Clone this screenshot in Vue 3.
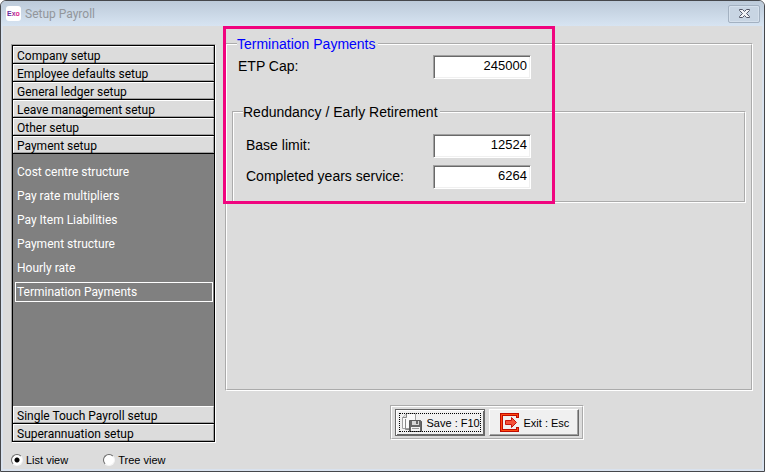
<script setup>
import { ref } from 'vue'

const topSections = [
  'Company setup',
  'Employee defaults setup',
  'General ledger setup',
  'Leave management setup',
  'Other setup',
  'Payment setup',
]
const bottomSections = ['Single Touch Payroll setup', 'Superannuation setup']

const pages = [
  'Cost centre structure',
  'Pay rate multipliers',
  'Pay Item Liabilities',
  'Payment structure',
  'Hourly rate',
  'Termination Payments',
]

const activePage = ref('Termination Payments')
const view = ref('list')
const etpCap = ref('245000')
const baseLimit = ref('12524')
const yearsService = ref('6264')
</script>

<template>
  <div class="window">
    <header class="titlebar">
      <svg class="app-icon" width="15" height="15" viewBox="0 0 15 15">
        <rect x="0" y="0" width="15" height="15" rx="3" fill="#fff" />
        <text x="1" y="10" font-family="Liberation Sans, sans-serif" font-size="7" font-weight="700">
          <tspan fill="#6a2c9c">E</tspan><tspan fill="#a3309a">x</tspan><tspan fill="#e0218a">o</tspan>
        </text>
      </svg>
      <h1>Setup Payroll</h1>
      <button type="button" class="close" aria-label="Close">
        <svg width="13" height="11" viewBox="0 0 13 11">
          <path
            d="M1.5 1.5H4.5L6.5 3.5L8.5 1.5H11.5V2.5L8.5 5.5L11.5 8.5V9.5H8.5L6.5 7.5L4.5 9.5H1.5V8.5L4.5 5.5L1.5 2.5Z"
            fill="#f2f4f7"
            stroke="#535666"
          />
        </svg>
      </button>
    </header>

    <div class="body">
      <aside class="side">
        <nav class="sections">
          <button v-for="name in topSections" :key="name" type="button" class="section">{{ name }}</button>
          <ul class="pages">
            <li v-for="page in pages" :key="page">
              <button type="button" class="page" :class="{ active: page === activePage }" @click="activePage = page">
                {{ page }}
              </button>
            </li>
          </ul>
          <button v-for="name in bottomSections" :key="name" type="button" class="section">{{ name }}</button>
        </nav>
        <div class="views">
          <label><input v-model="view" type="radio" name="view" value="list" />List view</label>
          <label><input v-model="view" type="radio" name="view" value="tree" />Tree view</label>
        </div>
      </aside>

      <main class="content">
        <fieldset class="group outer">
          <legend class="blue">Termination Payments</legend>
          <div class="row">
            <label for="etp-cap">ETP Cap:</label>
            <input id="etp-cap" v-model="etpCap" type="text" />
          </div>
          <fieldset class="group inner">
            <legend>Redundancy / Early Retirement</legend>
            <div class="row">
              <label for="base-limit">Base limit:</label>
              <input id="base-limit" v-model="baseLimit" type="text" />
            </div>
            <div class="row">
              <label for="years-service">Completed years service:</label>
              <input id="years-service" v-model="yearsService" type="text" />
            </div>
          </fieldset>
        </fieldset>

        <div class="actions">
          <button type="button" class="action default">
            <svg width="20" height="19" viewBox="0 0 20 19">
              <path d="M.5 4.5L4.5 .5H13.5V15.5H.5Z" fill="#fafafa" stroke="#a0a0a0" />
              <path d="M4.5 .5V4.5H.5" fill="#ddd" stroke="#8a8a8a" />
              <path d="M3.5 6V16.5H8" fill="none" stroke="#888" />
              <path d="M7.5 7.5H18.5L19.5 8.5V18.5H7.5Z" fill="#686868" stroke="#5a5a5a" />
              <rect x="10" y="8" width="7" height="4" fill="#d8d8d8" />
              <rect x="14" y="8" width="2" height="3" fill="#686868" />
              <rect x="9" y="14" width="9" height="4" fill="#f4f4f4" />
              <path d="M10 15.5H17" stroke="#999" />
            </svg>
            <span>Save : F10</span>
          </button>
          <button type="button" class="action">
            <svg width="19" height="19" viewBox="0 0 19 19">
              <path d="M17.5 5V1.5H1.5V17.5H17.5V14" fill="none" stroke="#c00b00" stroke-width="3" />
              <path d="M17.5 4V1.5H1.5V17.5H17.5V15" fill="none" stroke="#ff4a12" stroke-width="1" />
              <path d="M5.5 7.5H11.5V4.5L16.5 9.5L11.5 14.5V11.5H5.5Z" fill="#f4523a" stroke="#c8140a" />
            </svg>
            <span>Exit : Esc</span>
          </button>
        </div>
        <div class="highlight"></div>
      </main>
    </div>
  </div>
</template>

<style>
body {
  background: #fff;
}
</style>

<style scoped>
.window {
  box-sizing: border-box;
  display: flex;
  flex-direction: column;
  min-height: 100vh;
  border: 1px solid #45474b;
  border-radius: 6px 6px 0 0;
  overflow: hidden;
  background: #d9e2ee;
  font-family: "Liberation Sans", Arial, sans-serif;
  font-size: 14px;
  color: #000;
}

button,
input {
  font-family: inherit;
  margin: 0;
}

.titlebar {
  display: flex;
  align-items: center;
  height: 25px;
  padding: 0 4px 0 5px;
  background: linear-gradient(#bccad9, #d7e4f2);
}

.app-icon {
  margin-right: 4px;
}

h1 {
  flex: 1;
  margin: 0;
  font-family: Roboto, sans-serif;
  font-size: 12px;
  font-weight: 400;
  line-height: 18px;
  color: #92969b;
}

.close {
  display: flex;
  align-items: center;
  justify-content: center;
  width: 32px;
  height: 18px;
  padding: 0;
  border: 1px solid #a3b1c1;
  border-radius: 2px;
  background: #c8d5e3;
  box-shadow: inset 0 0 0 1px #d5e0ec;
}

.body {
  flex: 1;
  display: flex;
  gap: 9px;
  margin: 0 2px 2px;
  padding: 0 9px 0 8px;
  background: #dcdcdc;
}

.side {
  display: flex;
  flex-direction: column;
  width: 205px;
  padding-top: 18px;
}

.sections {
  flex: 1;
  display: flex;
  flex-direction: column;
  border: 1px solid #a0a0a0;
  border-right-color: #fff;
  border-bottom-color: #fff;
  background: #000;
  padding: 1px 1px 0;
}

.section {
  height: 17px;
  margin-bottom: 1px;
  padding: 1px 3px 0;
  border: 1px solid #fff;
  border-right-color: #a0a0a0;
  border-bottom-color: #a0a0a0;
  background: #dcdcdc;
  color: #000;
  font-family: Roboto, sans-serif;
  font-size: 12px;
  line-height: 16px;
  text-align: left;
}

.pages {
  flex: 1;
  margin: 0;
  padding: 8px 1px 8px 2px;
  list-style: none;
  background: #808080;
}

.page {
  display: block;
  width: 100%;
  height: 20px;
  margin-bottom: 4px;
  padding: 0 1px;
  border: 1px solid transparent;
  background: none;
  color: #fff;
  font-family: Roboto, sans-serif;
  font-size: 12px;
  line-height: 18px;
  text-align: left;
}

.page.active {
  border-color: #fff;
}

.views {
  display: flex;
  align-items: center;
  gap: 35px;
  height: 26px;
  padding-top: 7px;
  box-sizing: border-box;
  font-size: 11px;
}

.views label {
  display: flex;
  align-items: center;
  gap: 3px;
}

.views input {
  appearance: none;
  width: 12px;
  height: 12px;
  border: 1px solid #696969;
  border-right-color: #f4f4f4;
  border-bottom-color: #f4f4f4;
  border-radius: 50%;
  background: #fff;
}

.views input:checked {
  background: radial-gradient(circle, #000 2px, #fff 3px);
}

.content {
  position: relative;
  flex: 1;
  display: flex;
  flex-direction: column;
  padding: 9px 0 29px;
}

.group {
  min-width: 0;
  margin: 0;
  border: 2px groove #fff;
}

.outer {
  flex: 1;
  padding: 2px 5px 0;
}

.inner {
  margin-top: 24px;
  padding: 13px 12px 12px;
}

legend {
  margin-left: 5px;
  padding: 0 2px 0 0;
  line-height: 18px;
}

.inner legend {
  margin-left: -3px;
}

.blue {
  color: #0000ff;
}

.row {
  display: flex;
}

.outer > .row {
  padding-left: 6px;
}

.row + .row {
  margin-top: 7px;
}

.row label {
  width: 187px;
  line-height: 22px;
}

.outer > .row label {
  width: 195px;
}

.row input {
  box-sizing: border-box;
  width: 98px;
  height: 24px;
  padding: 0 3px 4px;
  border: 1px solid #a0a0a0;
  border-right-color: #fff;
  border-bottom-color: #fff;
  border-radius: 0;
  background: #fff;
  box-shadow: inset 1px 1px #696969, inset -1px -1px #f0f0f0;
  font-size: 13px;
  text-align: right;
}

.actions {
  display: flex;
  gap: 4px;
  align-self: center;
  margin: 14px 5px 0 0;
  padding: 2px 3px;
  border: 2px groove #fff;
}

.action {
  display: flex;
  align-items: center;
  gap: 5px;
  width: 90px;
  height: 27px;
  padding: 0 0 0 10px;
  border: 1px solid #fff;
  border-right-color: #696969;
  border-bottom-color: #696969;
  box-shadow: inset -1px -1px #a0a0a0;
  background: #f0f0f0;
  color: #000;
  font-size: 11px;
  white-space: nowrap;
}

.action.default {
  padding-left: 6px;
  border: 1px solid #696969;
  box-shadow: inset 1px 1px #fff, inset -1px -1px #696969;
  outline: 1px dotted #000;
  outline-offset: -5px;
}

.highlight {
  position: absolute;
  top: 0;
  left: -2px;
  width: 326px;
  height: 172px;
  border: 3px solid #f0047f;
  pointer-events: none;
}
</style>
